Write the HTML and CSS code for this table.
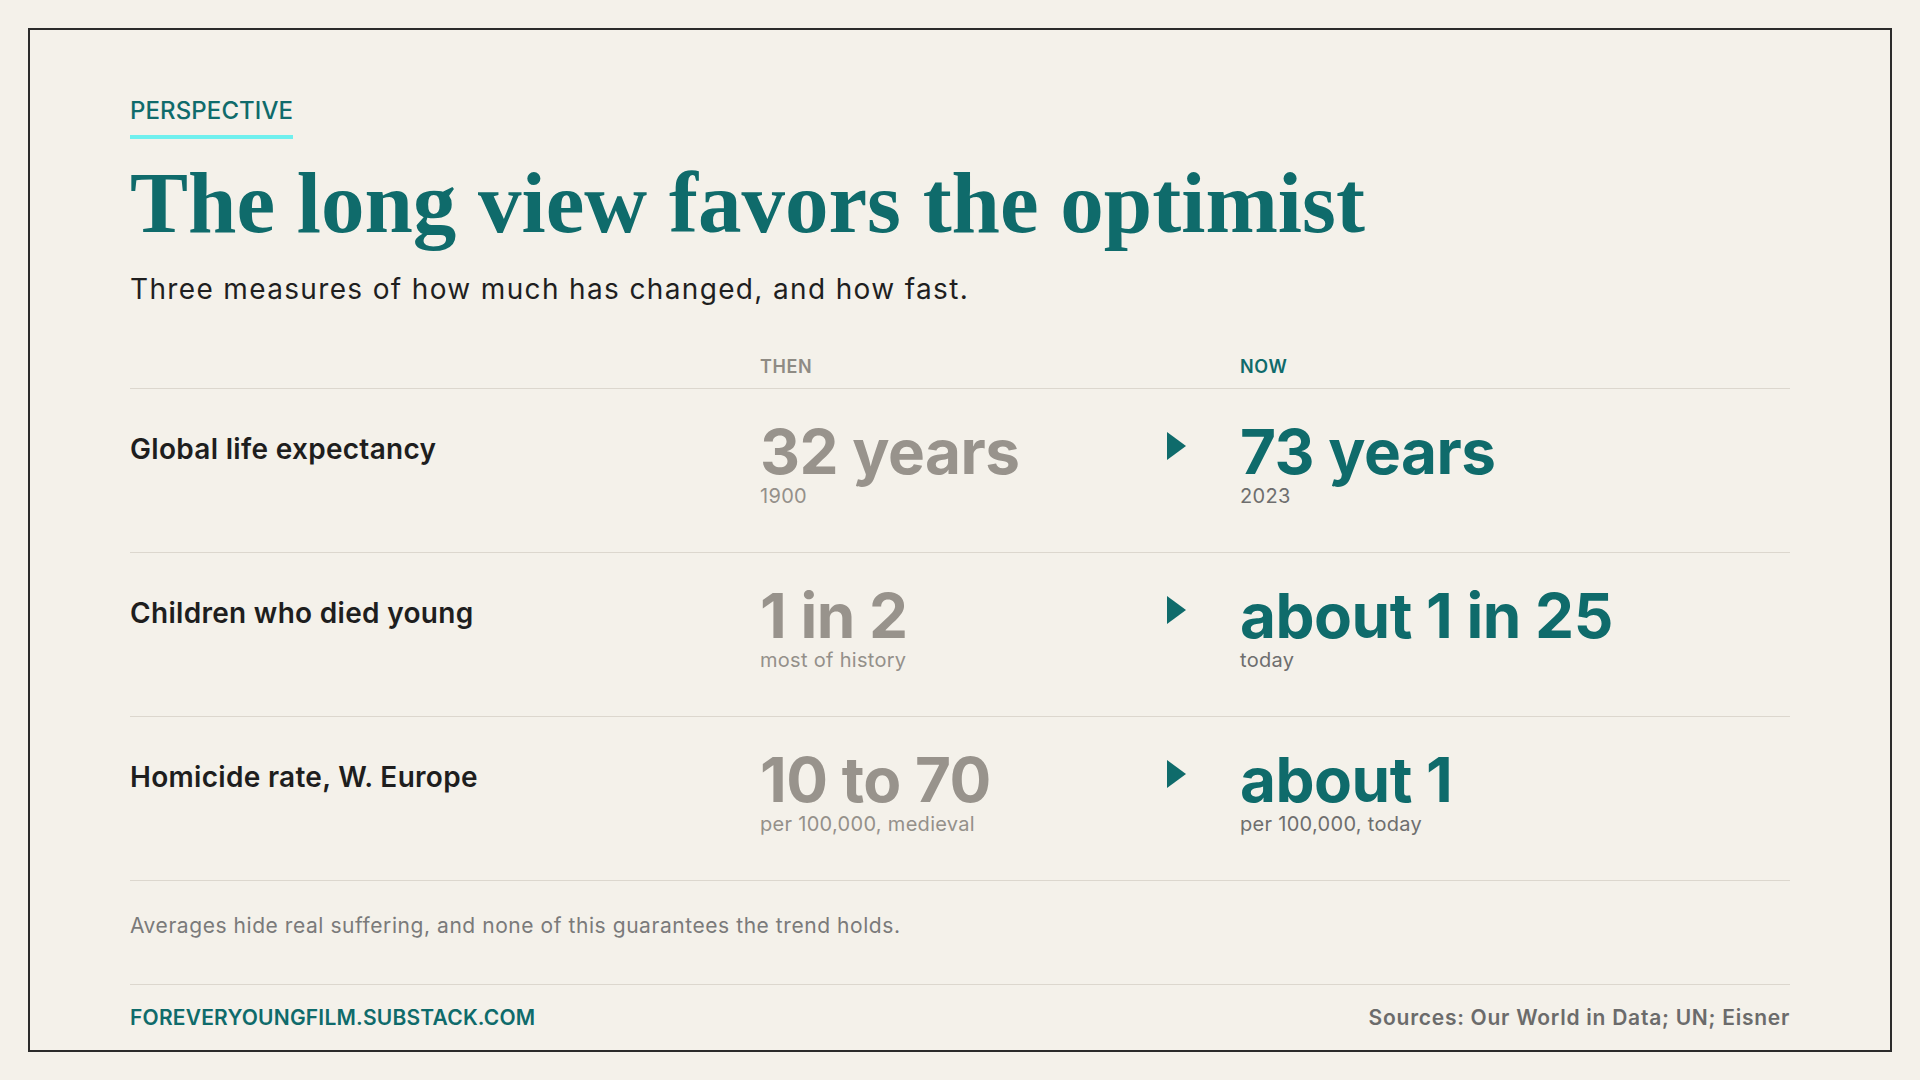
FILE: index.html
```html
<!DOCTYPE html>
<html lang="en">
<head>
<meta charset="utf-8">
<title>The long view favors the optimist</title>
<link rel="stylesheet" href="styles.css">
</head>
<body>
<div class="frame">
  <div class="eyebrow">PERSPECTIVE</div>
  <h1 class="title">The long view favors the optimist</h1>
  <p class="subtitle">Three measures of how much has changed, and how fast.</p>

  <div class="table">
    <div class="row head">
      <div></div>
      <div class="h-then">THEN</div>
      <div></div>
      <div class="h-now">NOW</div>
    </div>
    <div class="row">
      <div class="label">Global life expectancy</div>
      <div class="cell then"><div class="val">32 years</div><div class="sub">1900</div></div>
      <div class="arrow-cell"><span class="arrow"></span></div>
      <div class="cell now"><div class="val">73 years</div><div class="sub">2023</div></div>
    </div>
    <div class="row">
      <div class="label">Children who died young</div>
      <div class="cell then"><div class="val">1 in 2</div><div class="sub">most of history</div></div>
      <div class="arrow-cell"><span class="arrow"></span></div>
      <div class="cell now"><div class="val">about 1 in 25</div><div class="sub">today</div></div>
    </div>
    <div class="row">
      <div class="label">Homicide rate, W. Europe</div>
      <div class="cell then"><div class="val">10 to 70</div><div class="sub">per 100,000, medieval</div></div>
      <div class="arrow-cell"><span class="arrow"></span></div>
      <div class="cell now"><div class="val">about 1</div><div class="sub">per 100,000, today</div></div>
    </div>
  </div>

  <p class="note">Averages hide real suffering, and none of this guarantees the trend holds.</p>

  <div class="footer">
    <span class="site">FOREVERYOUNGFILM.SUBSTACK.COM</span>
    <span class="sources">Sources: Our World in Data; UN; Eisner</span>
  </div>
</div>
</body>
</html>
```

FILE: styles.css
```css
html, body {
  margin: 0;
  padding: 0;
  background: #f4f1ea;
}

body {
  font-family: Inter, "Noto Sans", "DejaVu Sans", sans-serif;
  color: #1e1e1e;
}

.frame {
  margin: 28px;
  height: 1024px;
  box-sizing: border-box;
  border: 2px solid #2b2b2b;
  padding: 68px 100px 0;
  display: flex;
  flex-direction: column;
}

.eyebrow {
  align-self: flex-start;
  font-size: 24px;
  line-height: 25px;
  font-weight: 500;
  color: #0f6b6b;
  padding-bottom: 12px;
  border-bottom: 4px solid #6ff0ee;
  letter-spacing: 0.1px;
}

.title {
  margin: 21px 0 0;
  font-family: "Liberation Serif", "Times New Roman", serif;
  font-weight: 700;
  font-size: 87px;
  line-height: 86px;
  color: #0f6b6b;
}

.subtitle {
  margin: 27px 0 0;
  font-size: 28px;
  line-height: 1.2;
  font-weight: 400;
  letter-spacing: 1.35px;
  color: #1f1f1f;
}

.table {
  margin-top: 51px;
}

.row {
  display: grid;
  grid-template-columns: 630px 407px 73px 1fr;
  align-items: start;
  border-bottom: 1px solid #dcd7ce;
  padding: 32px 0 44px;
}

.row.head {
  padding: 0 0 12px;
  font-size: 18px;
  line-height: 1;
  font-weight: 600;
  letter-spacing: 0.6px;
}

.h-then { color: #8f8b84; }
.h-now { color: #0f6b6b; }

.label {
  margin-top: 12px;
  font-size: 28px;
  line-height: 1.2;
  font-weight: 600;
  letter-spacing: 0.3px;
  color: #1e1e1e;
}

.val {
  font-size: 62px;
  line-height: 1;
  font-weight: 700;
  letter-spacing: -0.5px;
}

.sub {
  margin-top: 1px;
  font-size: 20px;
  line-height: 1.2;
  font-weight: 400;
  letter-spacing: 0.3px;
}

.then .val { color: #98938c; }
.then .sub { color: #94908a; }
.now .val { color: #0f6b6b; }
.now .sub { color: #6e6e6e; }

.arrow-cell {
  margin-top: 11px;
}

.arrow {
  display: block;
  width: 0;
  height: 0;
  border-left: 19px solid #0f6b6b;
  border-top: 14px solid transparent;
  border-bottom: 14px solid transparent;
}

.note {
  margin: 33px 0 0;
  font-size: 21px;
  line-height: 24px;
  letter-spacing: 0.56px;
  color: #7a7a7a;
}

.footer {
  margin-top: 46px;
  border-top: 1px solid #dcd7ce;
  padding-top: 20px;
  display: flex;
  justify-content: space-between;
  font-size: 21px;
  line-height: 1.2;
  font-weight: 600;
}

.site {
  color: #0f6b6b;
  letter-spacing: 0.2px;
}

.sources {
  color: #6b6b6b;
  letter-spacing: 0.74px;
}
```
